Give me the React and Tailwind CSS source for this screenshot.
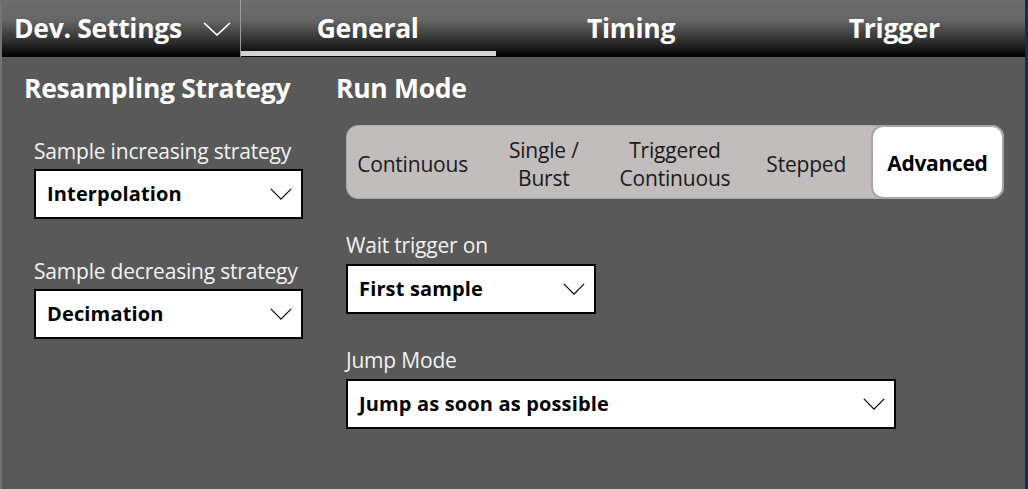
import React from "react";

const Chevron = ({ className = "", color = "#000", sw = "1.4" }) => (
  <svg className={className} viewBox="0 0 26 14" fill="none" preserveAspectRatio="none">
    <path d="M1 1 L13 13 L25 1" stroke={color} strokeWidth={sw} />
  </svg>
);

const Select = ({ value, className = "" }) => (
  <div className={`flex items-center justify-between h-[50px] bg-white border-2 border-black pl-[11px] pr-[9px] ${className}`}>
    <span className="text-[20px] font-bold text-black leading-none tracking-[0.15px]">{value}</span>
    <Chevron className="w-[22px] h-[12px]" />
  </div>
);

const segments = [
  ["Continuous"],
  ["Single /", "Burst"],
  ["Triggered", "Continuous"],
  ["Stepped"],
];

export default function App() {
  return (
    <div
      className="w-[1028px] h-[489px] bg-[#595959] flex flex-col border-l-2 border-l-[#747474] border-r-[3px] border-r-[#1c2a44] overflow-hidden"
      style={{ fontFamily: '"Open Sans", "Noto Sans", sans-serif' }}
    >
      {/* Header */}
      <div className="h-[57px] flex bg-[linear-gradient(to_bottom,#6d6d6d_0%,#666_35%,#2a2a2a_75%,#000_100%)]">
        <div className="w-[239px] flex items-center pl-[12px] border-r border-r-[#9a9a9a]">
          <span className="text-[26.5px] font-bold text-white tracking-[-0.3px]">Dev. Settings</span>
          <Chevron className="w-[28px] h-[14px] ml-[21px] mt-[1px]" color="#fff" sw="1.6" />
        </div>
        <div className="flex-1 grid grid-cols-3">
          <div className="relative flex items-center justify-center">
            <span className="text-[26.5px] font-bold text-white tracking-[-0.3px] -ml-[8px]">General</span>
            <div className="absolute left-0 bottom-[1px] w-[255px] h-[5px] bg-[#d4d4d4]" />
          </div>
          <div className="flex items-center justify-center">
            <span className="text-[26.5px] font-bold text-white tracking-[-0.3px] -ml-[4px]">Timing</span>
          </div>
          <div className="flex items-center justify-center">
            <span className="text-[26.5px] font-bold text-white tracking-[-0.3px]">Trigger</span>
          </div>
        </div>
      </div>

      {/* Body */}
      <div className="flex pt-[14px]">
        <div className="w-[332px] pl-[22px] flex flex-col">
          <div className="text-[26.5px] font-bold text-white tracking-[-0.3px] leading-[34px]">Resampling Strategy</div>
          <div className="pl-[10px] pt-[33px] flex flex-col">
            <div className="text-[21px] text-[#f2f2f2] leading-[26px] tracking-[-0.2px]">Sample increasing strategy</div>
            <Select value="Interpolation" className="w-[269px] mt-[5px]" />
            <div className="text-[21px] text-[#f2f2f2] leading-[26px] tracking-[-0.2px] mt-[39px]">Sample decreasing strategy</div>
            <Select value="Decimation" className="w-[269px] mt-[5px]" />
          </div>
        </div>

        <div className="flex-1 flex flex-col pl-[2px]">
          <div className="text-[26.5px] font-bold text-white tracking-[-0.3px] leading-[34px]">Run Mode</div>
          <div className="ml-[10px] mt-[20px] w-[658px] h-[74px] bg-[#c1bdbc] border border-[#a9a6a5] rounded-[12px] grid grid-cols-5">
            {segments.map((lines, i) => (
              <div key={i} className="flex flex-col items-center justify-center pt-[3px] text-[21px] leading-[28px] text-[#1a1a1a] tracking-[-0.2px]">
                {lines.map((l) => (
                  <span key={l}>{l}</span>
                ))}
              </div>
            ))}
            <div className="bg-white border-2 border-[#a6a6a6] rounded-[12px] -m-[1px] flex items-center justify-center pt-[3px] text-[21px] font-bold text-black tracking-[-0.3px]">
              Advanced
            </div>
          </div>
          <div className="ml-[10px] mt-[33px] text-[21px] text-[#f2f2f2] leading-[26px] tracking-[-0.2px]">Wait trigger on</div>
          <Select value="First sample" className="ml-[10px] mt-[6px] w-[250px]" />
          <div className="ml-[10px] mt-[33px] text-[21px] text-[#f2f2f2] leading-[26px] tracking-[-0.2px]">Jump Mode</div>
          <Select value="Jump as soon as possible" className="ml-[10px] mt-[6px] w-[550px]" />
        </div>
      </div>
    </div>
  );
}
